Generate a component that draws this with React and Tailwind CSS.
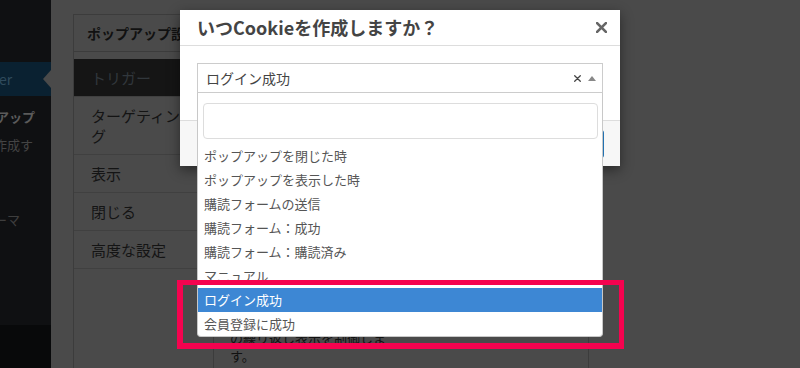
import React from "react";

const options = [
  "ポップアップを閉じた時",
  "ポップアップを表示した時",
  "購読フォームの送信",
  "購読フォーム：成功",
  "購読フォーム：購読済み",
  "マニュアル",
  "ログイン成功",
  "会員登録に成功",
];

const tabs = [
  { label: "トリガー", active: true },
  { label: "ターゲティング" },
  { label: "表示" },
  { label: "閉じる" },
  { label: "高度な設定" },
];

function Cross({ size, stroke, color }) {
  return (
    <svg width={size} height={size} viewBox="0 0 10 10" className="shrink-0">
      <path d="M1 1 L9 9 M9 1 L1 9" stroke={color} strokeWidth={stroke} strokeLinecap="round" />
    </svg>
  );
}

function Sidebar() {
  return (
    <aside className="w-[51px] shrink-0 h-full flex flex-col bg-[#0f1012] overflow-hidden whitespace-nowrap">
      <div className="h-[62px] shrink-0" />
      {/* active menu item, label clipped on the left */}
      <div className="relative h-[34px] shrink-0 bg-[#0a2131] flex items-center">
        <span className="-ml-[1px] text-[14px] text-[#2f4a5c]">er</span>
        <span className="absolute right-0 top-[8px] border-y-[9px] border-y-transparent border-r-[8px] border-r-[#4a4a4a]" />
      </div>
      <div className="mt-[7px] leading-[28px] text-[13px] font-bold text-[#5a5a5a] -ml-[4px]">アップ</div>
      <div className="leading-[28px] text-[13px] text-[#444] -ml-[6px]">作成す</div>
      <div className="mt-[47px] leading-[28px] text-[13px] text-[#3e3e3e] -ml-[6px]">ーマ</div>
      <div className="flex-1" />
      <div className="h-[43px] shrink-0 bg-[#08090a]" />
    </aside>
  );
}

function SettingsPanel() {
  return (
    <section className="ml-[22px] mt-[14px] w-[516px] h-[400px] border border-[#3c3c3c] flex flex-col">
      <div className="h-[37px] shrink-0 border-b border-[#3c3c3c] pl-[13px] flex items-center text-[14px] font-bold text-[#111]">
        ポップアップ設定
      </div>
      <div className="flex flex-1">
        <ul className="w-[140px] shrink-0 border-r border-[#3c3c3c] pt-[7px] flex flex-col">
          {tabs.map((t) => (
            <li
              key={t.label}
              className={`pl-[17px] pr-[23px] pt-[9px] pb-[8px] leading-[20px] text-[15px] border-b border-[#404040] ${
                t.active ? "bg-[#151515] text-[#31373c]" : "text-[#141414]"
              }`}
            >
              {t.label}
            </li>
          ))}
        </ul>
        <div className="flex-1 pl-[16px] pt-[277px] text-[13px] leading-[18px] text-[#111]">
          <p>の繰り返し表示を制御しま</p>
          <p>す。</p>
        </div>
      </div>
    </section>
  );
}

function CookieModal() {
  return (
    <div className="absolute left-[180px] top-[10px] w-[440px] bg-white shadow-[0_4px_12px_rgba(0,0,0,0.45)] flex flex-col">
      <div className="h-[36px] border-b border-[#dddddd] flex items-center justify-between pl-[17px] pr-[13px]">
        <h2 className="text-[18px] font-bold text-[#444]">いつCookieを作成しますか？</h2>
        <Cross size={11} stroke={2.4} color="#666" />
      </div>

      <div className="px-[17px] pt-[17px] pb-[27px]">
        <div className="relative">
          <div className="h-[30px] border border-[#cccccc] bg-white flex items-center pl-[8px] pr-[6px]">
            <span className="flex-1 text-[14px] text-[#444]">ログイン成功</span>
            <span className="mr-[7px]">
              <Cross size={7} stroke={1.8} color="#444" />
            </span>
            <span className="border-x-[4px] border-x-transparent border-b-[5px] border-b-[#888]" />
          </div>

          {/* open select2 dropdown */}
          <div className="absolute left-0 top-full w-full bg-white border border-t-0 border-[#c8c8c8] rounded-b-[4px] z-10">
            <div className="pl-[5px] pr-[4px] pt-[10px] pb-[5px]">
              <div className="h-[36px] border border-[#dddddd] rounded-[4px]" />
            </div>
            <ul className="text-[13px]">
              {options.map((o) => (
                <li
                  key={o}
                  className={`h-[24px] px-[6px] leading-[24px] ${
                    o === "ログイン成功" ? "bg-[#3d87d4] text-white" : "text-[#555]"
                  } ${o === "会員登録に成功" ? "rounded-b-[4px]" : ""}`}
                >
                  {o}
                </li>
              ))}
            </ul>
          </div>
        </div>
      </div>

      <div className="h-[46px] border-t border-[#dddddd] bg-[#f7f7f7] flex items-center justify-end pr-[16px]">
        <button className="h-[28px] px-[12px] rounded-[3px] bg-[#2271b1] text-[13px] text-white">
          保存
        </button>
      </div>
    </div>
  );
}

export default function App() {
  return (
    <div className="relative w-[800px] h-[368px] overflow-hidden bg-[#4a4a4a] flex items-start font-['Noto_Sans_CJK_JP','Noto_Sans',sans-serif]">
      <Sidebar />
      <SettingsPanel />
      <CookieModal />
      {/* annotation frame */}
      <div className="absolute left-[177px] top-[280px] w-[447px] h-[69px] border-[5px] border-l-[6px] border-b-[6px] border-[#f5034f] z-20" />
    </div>
  );
}
